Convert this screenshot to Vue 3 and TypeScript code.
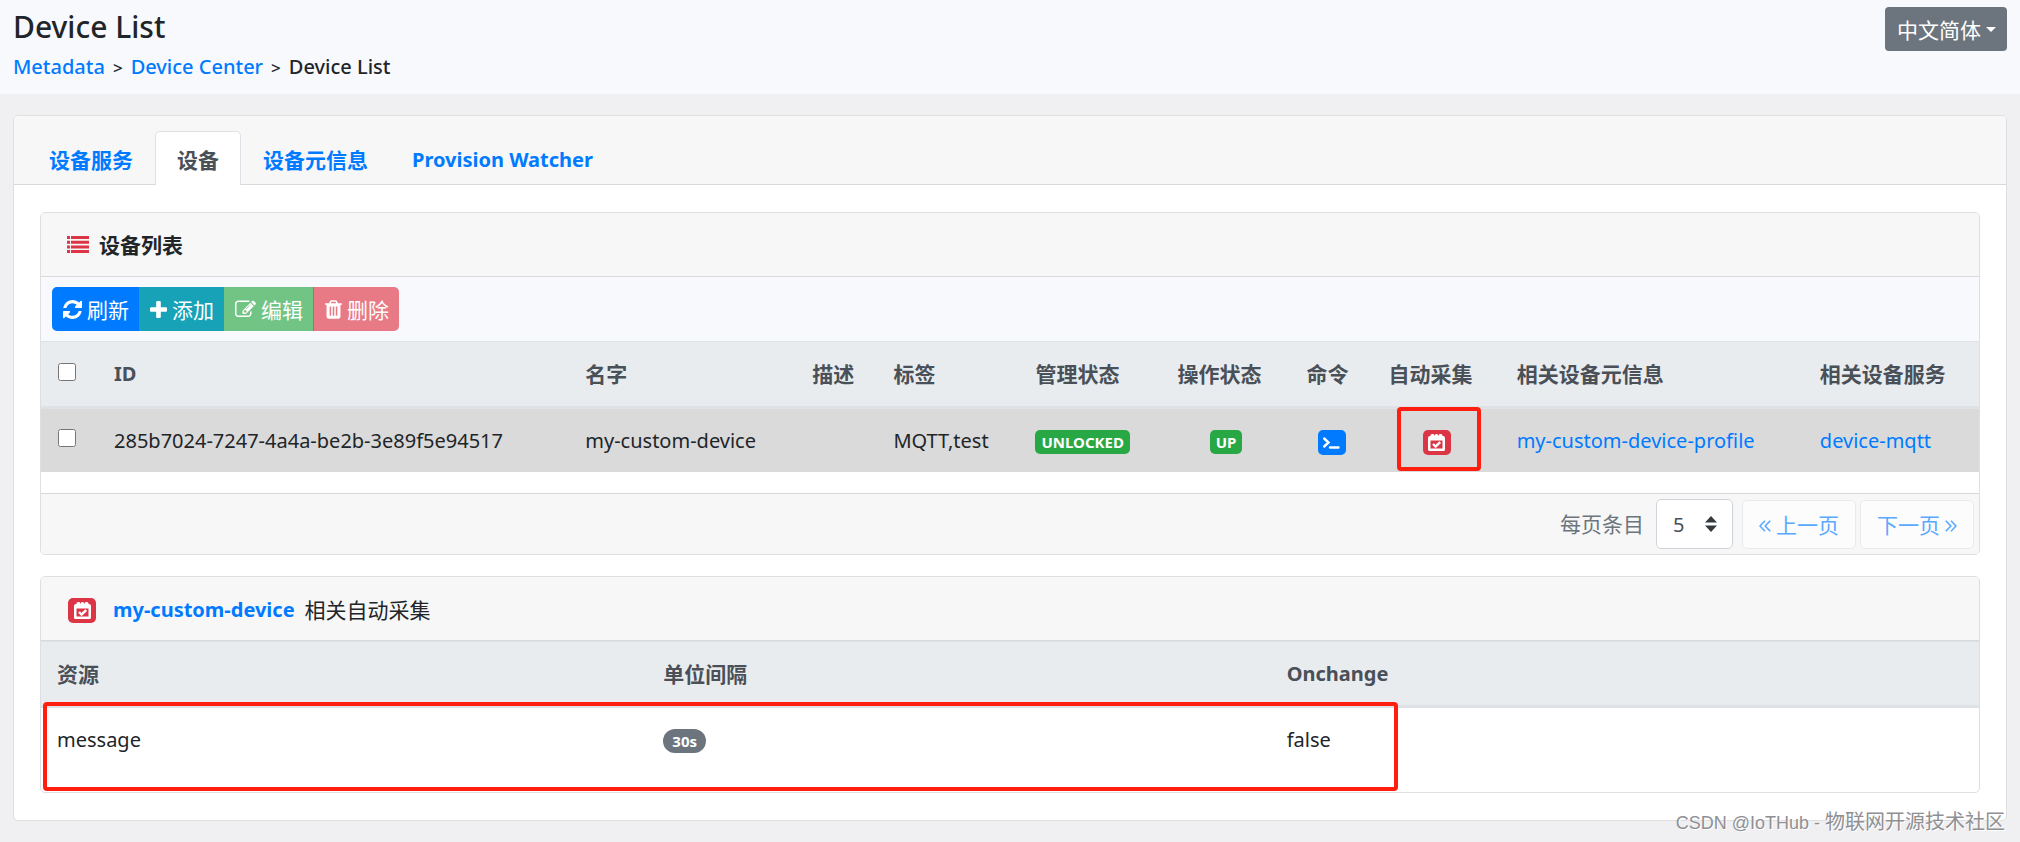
<script setup lang="ts">
import { ref } from 'vue'

interface Device {
  id: string
  name: string
  description: string
  labels: string
  adminState: string
  operatingState: string
  profile: string
  service: string
}

interface AutoEvent {
  resource: string
  interval: string
  onChange: boolean
}

const tabs = ['设备服务', '设备', '设备元信息', 'Provision Watcher']
const activeTab = ref('设备')
const pageSize = ref(5)
const selected = ref<string[]>([])

const devices: Device[] = [
  {
    id: '285b7024-7247-4a4a-be2b-3e89f5e94517',
    name: 'my-custom-device',
    description: '',
    labels: 'MQTT,test',
    adminState: 'UNLOCKED',
    operatingState: 'UP',
    profile: 'my-custom-device-profile',
    service: 'device-mqtt',
  },
]

const autoEvents: AutoEvent[] = [{ resource: 'message', interval: '30s', onChange: false }]

function toggleAll(event: Event) {
  selected.value = (event.target as HTMLInputElement).checked ? devices.map((d) => d.id) : []
}
</script>

<template>
  <svg class="symbols" aria-hidden="true">
    <symbol id="i-calendar" viewBox="0 0 17 17">
      <path
        fill="currentColor"
        fill-rule="evenodd"
        d="M2 2H2.500V1.500Q2.500 0 4 0H5Q6.500 0 6.500 1.500V2Q7 1 7.200 1Q7 0 8.500 0Q10 0 9.800 1L10.500 2V1.500Q10.500 0 12 0H13Q14.500 0 14.500 1.500V2H15Q17 2 17 4V15.500Q17 17 15.500 17H1.500Q0 17 0 15.500V4Q0 2 2 2ZM2.500 6.500V14.500H14.500V6.500Z"
      />
      <path d="M5 10L7.600 12.500L12.200 8.200" fill="none" stroke="currentColor" stroke-width="2.400" />
    </symbol>
  </svg>

  <header class="page-head">
    <div>
      <h1>Device List</h1>
      <nav class="crumbs" aria-label="Breadcrumb">
        <a href="#metadata">Metadata</a><span>&gt;</span><a href="#center">Device Center</a><span>&gt;</span>Device List
      </nav>
    </div>
    <button class="lang" type="button">中文简体<i class="caret"></i></button>
  </header>

  <main class="card outer">
    <nav class="tabs">
      <a
        v-for="tab in tabs"
        :key="tab"
        href="#tab"
        :class="{ active: tab === activeTab, latin: tab === 'Provision Watcher' }"
        @click.prevent="activeTab = tab"
        >{{ tab }}</a
      >
    </nav>

    <div class="content">
      <section class="card">
        <h2 class="card-head">
          <svg class="list-icon" viewBox="0 0 22 17" aria-hidden="true">
            <path
              fill="currentColor"
              d="M0 0h3v3H0zM4 0h18v3H4zM0 4.700h3v3H0zM4 4.700h18v3H4zM0 9.400h3v3H0zM4 9.400h18v3H4zM0 14h3v3H0zM4 14h18v3H4z"
            />
          </svg>
          设备列表
        </h2>

        <div class="toolbar">
          <div class="btn-group">
            <button class="btn primary" type="button">
              <svg width="19" height="19" viewBox="128 128 1536 1536" aria-hidden="true">
                <path
                  fill="currentColor"
                  d="M1639 1056q0 5-1 7-64 268-268 434.500t-478 166.500q-146 0-282.500-55t-243.500-157l-129 129q-19 19-45 19t-45-19-19-45v-448q0-26 19-45t45-19h448q26 0 45 19t19 45-19 45l-137 137q71 66 161 102t187 36q134 0 250-65t186-179q11-17 53-117 8-23 30-23h192q13 0 22.500 9.500t9.500 22.500zm25-800v448q0 26-19 45t-45 19h-448q-26 0-45-19t-19-45 19-45l138-138q-148-137-349-137-134 0-250 65t-186 179q-11 17-53 117-8 23-30 23h-199q-13 0-22.500-9.500t-9.500-22.500v-7q65-268 270-434.500t480-166.500q146 0 284 55.500t245 156.500l130-129q19-19 45-19t45 19 19 45z"
                />
              </svg>
              刷新
            </button>
            <button class="btn info" type="button">
              <svg width="17" height="17" viewBox="192 128 1408 1408" aria-hidden="true">
                <path
                  fill="currentColor"
                  d="M1600 736v192q0 40-28 68t-68 28h-416v416q0 40-28 68t-68 28h-192q-40 0-68-28t-28-68v-416h-416q-40 0-68-28t-28-68v-192q0-40 28-68t68-28h416v-416q0-40 28-68t68-28h192q40 0 68 28t28 68v416h416q40 0 68 28t28 68z"
                />
              </svg>
              添加
            </button>
            <button class="btn success" type="button" disabled>
              <svg width="21" height="19" viewBox="0 128 1792 1536" aria-hidden="true">
                <path
                  fill="currentColor"
                  d="M888 1184l116-116-152-152-116 116v56h96v96h56zm440-720q-16-16-33 1l-350 350q-17 17-1 33t33-1l350-350q17-17 1-33zm80 594v190q0 119-84.500 203.500t-203.500 84.500h-832q-119 0-203.500-84.500t-84.500-203.500v-832q0-119 84.500-203.500t203.500-84.500h832q63 0 117 25 15 7 18 23 3 17-9 29l-49 49q-14 14-32 8-23-6-45-6h-832q-66 0-113 47t-47 113v832q0 66 47 113t113 47h832q66 0 113-47t47-113v-126q0-13 9-22l64-64q15-15 35-7t20 29zm-96-738l288 288-672 672h-288v-288zm444 132l-92 92-288-288 92-92q28-28 68-28t68 28l152 152q28 28 28 68t-28 68z"
                />
              </svg>
              编辑
            </button>
            <button class="btn danger" type="button" disabled>
              <svg width="17" height="19" viewBox="192 128 1408 1536" aria-hidden="true">
                <path
                  fill="currentColor"
                  d="M704 1376v-704q0-14-9-23t-23-9h-64q-14 0-23 9t-9 23v704q0 14 9 23t23 9h64q14 0 23-9t9-23zm256 0v-704q0-14-9-23t-23-9h-64q-14 0-23 9t-9 23v704q0 14 9 23t23 9h64q14 0 23-9t9-23zm256 0v-704q0-14-9-23t-23-9h-64q-14 0-23 9t-9 23v704q0 14 9 23t23 9h64q14 0 23-9t9-23zm-544-992h448l-48-117q-7-9-17-11h-317q-10 2-17 11zm928 32v64q0 14-9 23t-23 9h-96v948q0 83-47 143.500t-113 60.500h-832q-66 0-113-58.500t-47-141.500v-952h-96q-14 0-23-9t-9-23v-64q0-14 9-23t23-9h309l70-167q15-37 54-63t79-26h320q40 0 79 26t54 63l70 167h309q14 0 23 9t9 23z"
                />
              </svg>
              删除
            </button>
          </div>
        </div>

        <table class="devices">
          <colgroup>
            <col class="c-check" />
            <col class="c-id" />
            <col class="c-name" />
            <col class="c-desc" />
            <col class="c-tags" />
            <col class="c-admin" />
            <col class="c-op" />
            <col class="c-cmd" />
            <col class="c-auto" />
            <col class="c-profile" />
            <col class="c-service" />
          </colgroup>
          <thead>
            <tr>
              <th><input type="checkbox" aria-label="全选" @change="toggleAll" /></th>
              <th class="latin">ID</th>
              <th>名字</th>
              <th>描述</th>
              <th>标签</th>
              <th>管理状态</th>
              <th>操作状态</th>
              <th>命令</th>
              <th>自动采集</th>
              <th>相关设备元信息</th>
              <th>相关设备服务</th>
            </tr>
          </thead>
          <tbody>
            <tr v-for="d in devices" :key="d.id">
              <td><input v-model="selected" type="checkbox" :value="d.id" :aria-label="d.name" /></td>
              <td>{{ d.id }}</td>
              <td>{{ d.name }}</td>
              <td>{{ d.description }}</td>
              <td>{{ d.labels }}</td>
              <td><span class="badge">{{ d.adminState }}</span></td>
              <td class="center"><span class="badge">{{ d.operatingState }}</span></td>
              <td class="center">
                <button class="icon-btn blue" type="button" aria-label="命令">
                  <svg width="17" height="13" viewBox="0 0 17 13" aria-hidden="true">
                    <path
                      d="M1.200 2.500L5.500 6.500L1.200 10.500M7 11.500H15.500"
                      fill="none"
                      stroke="currentColor"
                      stroke-width="2.400"
                      stroke-linecap="round"
                    />
                  </svg>
                </button>
              </td>
              <td class="center marked">
                <button class="icon-btn red" type="button" aria-label="自动采集">
                  <svg width="17" height="17"><use href="#i-calendar" /></svg>
                </button>
                <i class="mark"></i>
              </td>
              <td><a href="#profile">{{ d.profile }}</a></td>
              <td><a href="#service">{{ d.service }}</a></td>
            </tr>
          </tbody>
        </table>

        <footer class="pager">
          <label for="page-size">每页条目</label>
          <span class="select">
            <select id="page-size" v-model="pageSize">
              <option :value="5">5</option>
              <option :value="10">10</option>
              <option :value="15">15</option>
            </select>
            <svg width="12" height="16" viewBox="0 0 12 16" aria-hidden="true">
              <path d="M6 0L12 6.500H0zM6 16L0 9.500H12z" fill="#343a40" />
            </svg>
          </span>
          <button class="page-btn" type="button" disabled>
            <svg width="12" height="12" viewBox="0 0 12 12" aria-hidden="true">
              <path d="M6 .8L1 6L6 11.200M11.200 .8L6.200 6L11.200 11.200" fill="none" stroke="currentColor" stroke-width="1.600" />
            </svg>
            上一页
          </button>
          <button class="page-btn" type="button" disabled>
            下一页
            <svg width="12" height="12" viewBox="0 0 12 12" aria-hidden="true">
              <path d="M.8 .8L5.800 6L.8 11.200M6 .8L11 6L6 11.200" fill="none" stroke="currentColor" stroke-width="1.600" />
            </svg>
          </button>
        </footer>
      </section>

      <section class="card events">
        <h2 class="card-head related">
          <span class="icon-btn red"><svg width="17" height="17" aria-hidden="true"><use href="#i-calendar" /></svg></span>
          <a href="#device">my-custom-device</a>
          <span>相关自动采集</span>
        </h2>
        <div class="events-body">
          <table>
            <colgroup>
              <col class="c-resource" />
              <col class="c-interval" />
              <col class="c-change" />
            </colgroup>
            <thead>
              <tr>
                <th>资源</th>
                <th>单位间隔</th>
                <th class="latin">Onchange</th>
              </tr>
            </thead>
            <tbody>
              <tr v-for="e in autoEvents" :key="e.resource">
                <td>{{ e.resource }}</td>
                <td><span class="badge pill">{{ e.interval }}</span></td>
                <td>{{ e.onChange }}</td>
              </tr>
            </tbody>
          </table>
          <i class="mark wide"></i>
        </div>
      </section>
    </div>
  </main>

  <p class="watermark"><span>CSDN @IoTHub - </span>物联网开源技术社区</p>
</template>

<style>
body {
  margin: 0;
  background: #f0f0f3;
}

#app {
  position: relative;
  min-height: 100vh;
  color: #212529;
  font: 20px/32px 'Noto Sans', 'Noto Sans CJK SC', sans-serif;
}
</style>

<style scoped>
* {
  box-sizing: border-box;
}

a {
  color: #007bff;
  text-decoration: none;
}

button,
select {
  margin: 0;
  font-family: inherit;
}

.symbols {
  position: absolute;
  width: 0;
  height: 0;
}

.page-head {
  display: flex;
  justify-content: space-between;
  align-items: flex-start;
  height: 94px;
  padding: 7px 13px 0;
  background: #f8f9fc;
}

h1 {
  margin: 0;
  font-size: 30px;
  font-weight: 500;
  line-height: 40px;
}

.crumbs {
  margin-top: 4px;
  font-weight: 500;
}

.crumbs span {
  margin: 0 8px;
  font-size: 17px;
}

.lang {
  display: flex;
  align-items: center;
  gap: 5px;
  height: 44px;
  padding: 0 11px 0 12px;
  border: 0;
  border-radius: 4px;
  background: #6c757d;
  color: #fff;
  font-size: 21px;
}

.caret {
  border: 5px solid transparent;
  border-top-color: #fff;
  border-bottom: 0;
}

.card {
  border: 1px solid #dfdfdf;
  border-radius: 5px;
  background: #fff;
}

.outer {
  margin: 21px 13px 0;
}

.tabs {
  display: flex;
  padding: 15px 13px 0;
  border-bottom: 1px solid #d9d9d9;
  border-radius: 4px 4px 0 0;
  background: #f7f7f7;
}

.tabs a {
  height: 54px;
  margin-bottom: -1px;
  padding: 12px 21px 0;
  border: 1px solid transparent;
  border-bottom: 0;
  border-radius: 5px 5px 0 0;
  font-size: 21px;
  font-weight: 700;
}

.tabs a.latin,
th.latin {
  font-size: 20px;
}

.tabs a.active {
  border-color: #dee2e6;
  background: #fff;
  color: #495057;
}

.content {
  padding: 27px 26px;
}

.card-head {
  display: flex;
  align-items: center;
  gap: 10px;
  height: 64px;
  margin: 0;
  padding: 0 26px;
  border-bottom: 1px solid #d9d9d9;
  border-radius: 4px 4px 0 0;
  background: #f7f7f7;
  font-size: 21px;
  font-weight: 700;
}

.list-icon {
  width: 22px;
  height: 17px;
  color: #dc3545;
}

.toolbar {
  padding: 10px 11px;
  background: #f8f9fc;
}

.btn-group {
  display: inline-flex;
  overflow: hidden;
  border-radius: 5px;
  vertical-align: top;
}

.btn {
  display: flex;
  align-items: center;
  gap: 5px;
  height: 44px;
  padding: 0 10px 0 11px;
  border: 0;
  color: #fff;
  font-size: 21px;
}

.primary {
  background: #007bff;
}

.info {
  background: #17a2b8;
}

.success {
  background: #72c485;
}

.danger {
  border-left: 1px solid #c2665f;
  background: #e77a84;
}

table {
  width: 100%;
  table-layout: fixed;
  border-spacing: 0;
}

th,
td {
  padding: 0 16px;
  text-align: left;
  vertical-align: middle;
  white-space: nowrap;
}

th {
  height: 67px;
  border-top: 1px solid #dee2e6;
  border-bottom: 3px solid #dee2e6;
  background: #e9ecef;
  color: #495057;
  font-size: 21px;
  font-weight: 700;
}

td {
  height: 63px;
}

.devices {
  margin-bottom: 21px;
}

.devices th {
  height: 68px;
}

.devices td {
  background: #dadada;
}

.devices td.center {
  padding: 0;
  text-align: center;
}

input[type='checkbox'] {
  display: block;
  width: 18px;
  height: 18px;
  margin: 0 0 5px 1px;
}

.c-check { width: 57px; }
.c-id { width: 471px; }
.c-name { width: 227px; }
.c-desc { width: 81px; }
.c-tags { width: 142px; }
.c-admin { width: 142px; }
.c-op { width: 129px; }
.c-cmd { width: 82px; }
.c-auto { width: 128px; }
.c-profile { width: 303px; }
.c-service { width: 175px; }
.c-resource { width: 606px; }
.c-interval { width: 623px; }
.c-change { width: 708px; }

.badge {
  display: inline-block;
  padding: 0 6px;
  border-radius: 5px;
  background: #28a745;
  color: #fff;
  font-size: 15px;
  font-weight: 700;
  line-height: 24px;
  vertical-align: middle;
}

.pill {
  padding: 0 9px;
  border-radius: 12px;
  background: #6c757d;
}

.icon-btn {
  display: inline-flex;
  align-items: center;
  justify-content: center;
  width: 28px;
  height: 25px;
  padding: 0;
  border: 0;
  border-radius: 5px;
  color: #fff;
  vertical-align: middle;
}

.blue {
  background: #007bff;
}

.red {
  background: #dc3545;
}

.marked {
  position: relative;
}

.mark {
  position: absolute;
  top: -2px;
  right: 20px;
  width: 84px;
  height: 64px;
  border: 4px solid #ff1e10;
  border-radius: 4px;
  pointer-events: none;
}

.pager {
  display: flex;
  align-items: center;
  justify-content: flex-end;
  gap: 4px;
  height: 61px;
  padding: 0 5px;
  border-top: 1px solid #d9d9d9;
  border-radius: 0 0 4px 4px;
  background: #f7f7f7;
  color: #6c757d;
  font-size: 21px;
}

.select {
  display: flex;
  align-items: center;
  position: relative;
  margin: 0 5px 0 8px;
}

.select select {
  appearance: none;
  width: 77px;
  height: 50px;
  padding: 0 16px;
  border: 1px solid #ced4da;
  border-radius: 5px;
  background: #fff;
  color: #495057;
  font-size: 20px;
}

.select svg {
  position: absolute;
  right: 16px;
  pointer-events: none;
}

.page-btn {
  display: flex;
  align-items: center;
  justify-content: center;
  gap: 5px;
  width: 114px;
  height: 49px;
  padding: 0;
  border: 1px solid #e8ebee;
  border-radius: 5px;
  background: #fcfcfc;
  color: #58a9ff;
  font-size: 21px;
}

.page-btn svg {
  margin-top: 3px;
}

.events {
  margin-top: 21px;
}

.related {
  padding-top: 3px;
  padding-left: 27px;
}

.related a {
  margin-left: 7px;
  font-size: 20px;
}

.related span {
  font-weight: 400;
}

.events-body {
  position: relative;
  padding-bottom: 21px;
}

.wide {
  top: 61px;
  right: auto;
  left: 2px;
  width: calc(70% - 2px);
  height: 89px;
}

.watermark {
  position: absolute;
  right: 15px;
  bottom: 3px;
  margin: 0;
  color: #8f9094;
  font: 20px/32px 'Liberation Sans', 'Noto Sans CJK SC', sans-serif;
  text-shadow: 1px 1px 0 #fff;
}

.watermark span {
  font-size: 18px;
}
</style>
